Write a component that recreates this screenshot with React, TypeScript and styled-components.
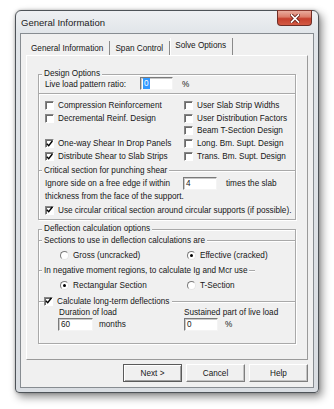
import React from 'react';
import styled, { createGlobalStyle } from 'styled-components';

const GlobalStyle = createGlobalStyle`
  html, body { margin: 0; padding: 0; background: #ffffff; width: 334px; height: 409px; overflow: hidden; }
  body { font-family: "Liberation Sans", Arial, sans-serif; font-size: 8.2px; color: #161616; }
  * { box-sizing: border-box; }
`;

const Window = styled.div`
  margin: 10px 0 0 15px;
  width: 304px;
  height: 383px;
  border: 1px solid #4e5358;
  border-radius: 6px 6px 4px 4px;
  background: linear-gradient(180deg, #eef0f3 0px, #e1e5e9 22px, #d9dde2 100%);
  box-shadow: 3px 4px 8px rgba(0, 0, 0, 0.45), 0 0 3px rgba(0, 0, 0, 0.25);
  padding: 0 4px 4px 4px;
  display: flex;
  flex-direction: column;
`;

const TitleBar = styled.div`
  height: 22px;
  display: flex;
  align-items: center;
  flex: none;
`;

const Title = styled.span`
  margin-left: 1px;
  font-size: 9.5px;
  color: #1c1c1c;
`;

const CloseBtn = styled.div`
  width: 35px;
  height: 16px;
  margin: -1px 2px 0 auto;
  align-self: flex-start;
  border: 1px solid #6e2e26;
  border-top-color: #8a3a30;
  border-radius: 0 0 4px 4px;
  background: linear-gradient(180deg, #e9ab9c 0%, #dc7d6a 42%, #c6402d 55%, #d35a44 100%);
  display: flex;
  align-items: center;
  justify-content: center;
`;

const Client = styled.div`
  flex: 1;
  border: 1px solid #878c91;
  background: #f0f0f0;
  padding: 4px 5px 5px 5px;
  display: flex;
  flex-direction: column;
`;

const TabStrip = styled.div`
  display: flex;
  align-items: flex-end;
  height: 17px;
  flex: none;
`;

const Tab = styled.div<{ $active?: boolean }>`
  height: ${(p) => (p.$active ? 17 : 14)}px;
  padding: ${(p) => (p.$active ? '0 6px 0 4px' : '0 6px 0 5px')};
  border-right: 1px solid #8a8a8a;
  border-left: ${(p) => (p.$active ? '1px solid #ffffff' : 'none')};
  display: flex;
  align-items: center;
  white-space: nowrap;
  padding-bottom: ${(p) => (p.$active ? 2 : 0)}px;
`;

const TabPage = styled.div`
  height: 305px;
  flex: none;
  border: 1px solid;
  border-color: #ffffff #9a9a9a #9a9a9a #ffffff;
  padding: 18px 11px 0 11px;
  display: flex;
  flex-direction: column;
`;

const Group = styled.div<{ $h: number; $mt?: number }>`
  height: ${(p) => p.$h}px;
  margin-top: ${(p) => p.$mt ?? 0}px;
  border: 1px solid #a9a9a9;
  box-shadow: inset 1px 1px 0 #ffffff, 1px 1px 0 #ffffff;
  display: flex;
  flex-direction: column;
  flex: none;
`;

const Legend = styled.span`
  align-self: flex-start;
  margin: -6px 0 0 3px;
  padding: 0 2px;
  height: 9px;
  line-height: 9px;
  background: #f0f0f0;
  white-space: nowrap;
`;

const Row = styled.div<{ $mt?: number; $h?: number; $pl?: number }>`
  display: flex;
  align-items: center;
  height: ${(p) => p.$h ?? 13}px;
  margin-top: ${(p) => p.$mt ?? 0}px;
  padding-left: ${(p) => p.$pl ?? 6}px;
  white-space: nowrap;
  flex: none;
`;

const Label = styled.span<{ $w?: number; $ml?: number; $mt?: number }>`
  ${(p) => (p.$w ? `width: ${p.$w}px; flex: none;` : '')}
  margin-left: ${(p) => p.$ml ?? 0}px;
  margin-top: ${(p) => p.$mt ?? 0}px;
  white-space: nowrap;
`;

const Field = styled.div<{ $w: number }>`
  width: ${(p) => p.$w}px;
  height: 13px;
  flex: none;
  background: #ffffff;
  border: 1px solid;
  border-color: #7a7a7a #f4f4f4 #f4f4f4 #7a7a7a;
  box-shadow: inset 1px 1px 0 #c8c8c8;
  padding-left: 2px;
  display: flex;
  align-items: center;
`;

const Selected = styled.span`
  background: #3399ff;
  color: #ffffff;
  padding: 0 1px;
  line-height: 11px;
`;

const Rule = styled.div<{ $mt: number }>`
  height: 1px;
  margin-top: ${(p) => p.$mt}px;
  background: #a9a9a9;
  box-shadow: 0 1px 0 #ffffff;
  flex: none;
`;

const CheckGrid = styled.div`
  display: grid;
  grid-template-columns: 139px 1fr;
  grid-auto-rows: 12.8px;
  padding: 5px 0 0 6px;
`;

const Item = styled.label`
  display: flex;
  align-items: center;
  gap: 4px;
  white-space: nowrap;
`;

const Box = styled.span`
  width: 9px;
  height: 9px;
  flex: none;
  background: #ffffff;
  border: 1px solid;
  border-color: #858585 #ffffff #ffffff #858585;
  box-shadow: inset 1px 1px 0 #6a6a6a;
  display: inline-flex;
  align-items: center;
  justify-content: center;
  overflow: visible;
`;

const RadioDot = styled.span<{ $on?: boolean }>`
  width: 9px;
  height: 9px;
  flex: none;
  border-radius: 50%;
  background: #ffffff;
  border: 1px solid;
  border-color: #7a7a7a #e6e6e6 #e6e6e6 #7a7a7a;
  display: inline-flex;
  align-items: center;
  justify-content: center;
  &::after {
    content: '';
    width: 3px;
    height: 3px;
    border-radius: 50%;
    background: ${(p) => (p.$on ? '#000' : 'transparent')};
  }
`;

const Divider = styled.div<{ $mt: number; $h?: number }>`
  display: flex;
  align-items: center;
  height: ${(p) => p.$h ?? 9}px;
  margin-top: ${(p) => p.$mt}px;
  flex: none;
`;

const Seg = styled.span<{ $w?: number; $ml?: number }>`
  height: 1px;
  background: #a9a9a9;
  box-shadow: 0 1px 0 #ffffff;
  margin-left: ${(p) => p.$ml ?? 0}px;
  flex: ${(p) => (p.$w ? `0 0 ${p.$w}px` : '1')};
`;

const DivLabel = styled.span`
  padding: 0 2px;
  line-height: 9px;
  white-space: nowrap;
`;

const Pair = styled.div<{ $col: number; $pl: number; $mt?: number; $h?: number }>`
  display: grid;
  grid-template-columns: ${(p) => p.$col}px 1fr;
  padding-left: ${(p) => p.$pl}px;
  margin-top: ${(p) => p.$mt ?? 0}px;
  height: ${(p) => p.$h ?? 13}px;
  align-items: center;
  flex: none;
`;

const Cell = styled.div`
  display: flex;
  align-items: center;
  gap: 4px;
  white-space: nowrap;
`;

const ButtonRow = styled.div`
  display: flex;
  justify-content: flex-end;
  gap: 4px;
  margin-top: 4px;
  flex: none;
`;

const Button = styled.div<{ $default?: boolean }>`
  width: 59px;
  height: 18px;
  display: flex;
  align-items: center;
  justify-content: center;
  background: #f0f0f0;
  border: 1px solid;
  border-color: ${(p) => (p.$default ? '#5a5a5a' : '#ffffff #7f7f7f #7f7f7f #ffffff')};
  box-shadow: ${(p) => (p.$default ? 'inset 1px 1px 0 #ffffff, inset -1px -1px 0 #a0a0a0' : 'inset -1px -1px 0 #c4c4c4')};
`;

const Check = () => (
  <svg width="8" height="8" viewBox="0 0 8 8" style={{ overflow: 'visible' }}>
    <path d="M0.8 3.8 L2.7 5.8 L6.4 1" fill="none" stroke="#000" strokeWidth="1.4" />
  </svg>
);

const CheckBox = ({ checked }: { checked?: boolean }) => <Box>{checked ? <Check /> : null}</Box>;

const CB = ({ checked, children }: { checked?: boolean; children: React.ReactNode }) => (
  <Item>
    <CheckBox checked={checked} />
    <span>{children}</span>
  </Item>
);

const Radio = ({ on, children }: { on?: boolean; children: React.ReactNode }) => (
  <Cell>
    <RadioDot $on={on} />
    <span>{children}</span>
  </Cell>
);

export default function App() {
  return (
    <>
      <GlobalStyle />
      <Window>
        <TitleBar>
          <Title>General Information</Title>
          <CloseBtn>
            <svg width="10" height="9" viewBox="0 0 10 9">
              <path d="M1.5 1 L8.5 8 M8.5 1 L1.5 8" stroke="#6a2118" strokeWidth="3.4" strokeLinecap="square" />
              <path d="M1.5 1 L8.5 8 M8.5 1 L1.5 8" stroke="#ffffff" strokeWidth="1.7" strokeLinecap="square" />
            </svg>
          </CloseBtn>
        </TitleBar>
        <Client>
          <TabStrip>
            <Tab>General Information</Tab>
            <Tab>Span Control</Tab>
            <Tab $active>Solve Options</Tab>
          </TabStrip>
          <TabPage>
            <Group $h={146}>
              <Legend>Design Options</Legend>
              <Row $mt={-2} $h={14}>
                <Label $w={95} $mt={2}>Live load pattern ratio:</Label>
                <Field $w={33}>
                  <Selected>0</Selected>
                </Field>
                <Label $ml={9} $mt={2}>%</Label>
              </Row>
              <Rule $mt={3} />
              <CheckGrid>
                <CB>Compression Reinforcement</CB>
                <CB>User Slab Strip Widths</CB>
                <CB>Decremental Reinf. Design</CB>
                <CB>User Distribution Factors</CB>
                <span />
                <CB>Beam T-Section Design</CB>
                <CB checked>One-way Shear In Drop Panels</CB>
                <CB>Long. Bm. Supt. Design</CB>
                <CB checked>Distribute Shear to Slab Strips</CB>
                <CB>Trans. Bm. Supt. Design</CB>
              </CheckGrid>
              <Divider $mt={3.5}>
                <Seg $w={3} />
                <DivLabel>Critical section for punching shear</DivLabel>
                <Seg />
              </Divider>
              <Row $mt={1.5}>
                <Label $w={138}>Ignore side on a free edge if within</Label>
                <Field $w={34}>4</Field>
                <Label $ml={9}>times the slab</Label>
              </Row>
              <Row>
                <Label>thickness from the face of the support.</Label>
              </Row>
              <Row $mt={1}>
                <CB checked>Use circular critical section around circular supports (if possible).</CB>
              </Row>
            </Group>
            <Group $h={115} $mt={9}>
              <Legend>Deflection calculation options</Legend>
              <Divider $mt={2.5}>
                <Seg $w={3} />
                <DivLabel>Sections to use in deflection calculations are</DivLabel>
                <Seg />
              </Divider>
              <Pair $col={127} $pl={21} $mt={4}>
                <Radio>Gross (uncracked)</Radio>
                <Radio on>Effective (cracked)</Radio>
              </Pair>
              <Divider $mt={4}>
                <Seg $w={3} />
                <DivLabel>In negative moment regions, to calculate Ig and Mcr use</DivLabel>
                <Seg $w={6} />
              </Divider>
              <Pair $col={127} $pl={21} $mt={4}>
                <Radio on>Rectangular Section</Radio>
                <Radio>T-Section</Radio>
              </Pair>
              <Divider $mt={4} $h={11}>
                <Seg $w={5} />
                <CB checked>Calculate long-term deflections</CB>
                <Seg $ml={3} />
              </Divider>
              <Pair $col={125} $pl={20} $h={11}>
                <Cell>Duration of load</Cell>
                <Cell>Sustained part of live load</Cell>
              </Pair>
              <Pair $col={126} $pl={19}>
                <Cell>
                  <Field $w={35}>60</Field>
                  <Label $ml={2}>months</Label>
                </Cell>
                <Cell>
                  <Field $w={34}>0</Field>
                  <Label $ml={3}>%</Label>
                </Cell>
              </Pair>
            </Group>
          </TabPage>
          <ButtonRow>
            <Button $default>Next &gt;</Button>
            <Button>Cancel</Button>
            <Button>Help</Button>
          </ButtonRow>
        </Client>
      </Window>
    </>
  );
}
